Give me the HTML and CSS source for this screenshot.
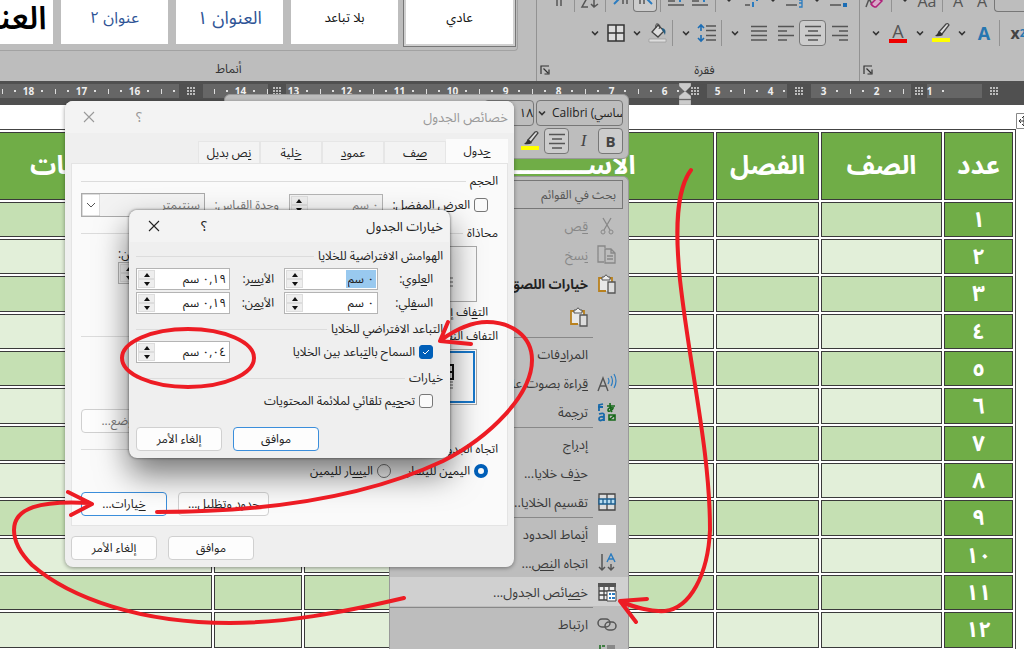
FILE: index.html
```html
<!DOCTYPE html>
<html lang="ar" dir="rtl">
<head>
<meta charset="utf-8">
<title>خيارات الجدول</title>
<link rel="stylesheet" href="styles.css">
</head>
<body>
<svg class="defs" aria-hidden="true">
  <symbol id="chev" viewBox="0 0 10 10"><path d="M2 3.5l3 3 3-3" fill="none" stroke="#333" stroke-width="1.6"/></symbol>
  <symbol id="launch" viewBox="0 0 10 10"><path d="M1 9V1h8M3.500 3.500L8 8M9 4.500V9H4.500" fill="none" stroke="#333" stroke-width="1.200"/></symbol>
  <symbol id="center" viewBox="0 0 22 22"><path d="M3 4.500h16M6 9h10M3 13.500h16M6 18h10" stroke="#555" stroke-width="1.500"/></symbol>
  <symbol id="marker" viewBox="0 0 22 22"><path d="M9 10l7-8q2-1 3 1l-7 9z" fill="#ddd" stroke="#444" stroke-width="1.300"/><path d="M9 9l4 4q-3 2-8 1 2-1 4-5z" fill="#333"/><path d="M2 16h18v4H2z" fill="#ff0"/></symbol>
  <symbol id="close" viewBox="0 0 12 12"><path d="M1 1l10 10M11 1L1 11" fill="none" stroke="currentColor" stroke-width="1.100"/></symbol>
  <symbol id="paste" viewBox="0 0 20 20"><path d="M2 4h12v13H2z" fill="#e8e8e8"/><path d="M6 4H2v13h7M11 4h4v4" fill="none" stroke="#b9811e" stroke-width="1.800"/><path d="M5 6V3h2q2-4 4 0h2v3z" fill="#eee" stroke="#555"/><path d="M11 8h7v11h-7z" fill="#ddd" stroke="#555" stroke-width="1.300"/></symbol>
</svg>

<header class="ribbon">
  <section class="group font-group">
    <div class="tools upper">
      <button class="tool" aria-label="مسح التنسيق"><svg viewBox="0 0 22 12"><path d="M1 7l3-8M4-1l3 5" stroke="#555" stroke-width="1.500"/><path d="M6 4l6-6 5 3-6 6q-3 0-5-3z" fill="#d9a8c8" stroke="#b0207a" stroke-width="1.500"/></svg></button>
      <span class="rule"></span>
      <button class="tool chev"><svg viewBox="0 0 10 12"><path d="M3 0h4L5 2z" fill="#333"/></svg></button>
      <button class="tool txt">Aa</button>
      <span class="rule"></span>
      <button class="tool txt">A</button>
      <button class="tool txt">A</button>
      <span class="stub"></span>
    </div>
    <div class="tools">
      <button class="tool chev" aria-label="لون الخط"><svg><use href="#chev"/></svg></button>
      <button class="tool letter red">A</button>
      <button class="tool chev"><svg><use href="#chev"/></svg></button>
      <button class="tool" aria-label="تمييز"><svg><use href="#marker"/></svg></button>
      <button class="tool chev"><svg><use href="#chev"/></svg></button>
      <button class="tool letter glow">A</button>
      <span class="rule"></span>
      <button class="tool sup">x<sup>2</sup></button>
    </div>
    <footer class="caption"><svg class="launch"><use href="#launch"/></svg></footer>
  </section>

  <section class="group para-group">
    <div class="tools upper">
      <button class="tool" aria-label="علامات الفقرة"><svg viewBox="0 0 22 12"><path d="M9 0v6M13 0v6" stroke="#555" stroke-width="1.500"/></svg></button>
      <span class="rule"></span>
      <button class="tool" aria-label="فرز"><svg viewBox="0 0 22 12"><path d="M8-2L3 7h6M15-2v9M12 4l3 3 4-3" fill="none" stroke="#555" stroke-width="1.500"/></svg></button>
      <span class="rule"></span>
      <button class="tool" aria-label="من اليسار إلى اليمين"><svg viewBox="0 0 22 12"><path d="M4 4l5-5" stroke="#2b7cc0" stroke-width="2"/><path d="M13 0v4M17 0v4" stroke="#555" stroke-width="1.500"/></svg></button>
      <button class="tool on" aria-label="من اليمين إلى اليسار"><svg viewBox="0 0 22 12"><path d="M6 0v4M10 0v4" stroke="#555" stroke-width="1.500"/><path d="M18 4l-5-5" stroke="#2b7cc0" stroke-width="2"/></svg></button>
      <span class="rule"></span>
      <button class="tool" aria-label="زيادة المسافة"><svg viewBox="0 0 22 12"><path d="M3 1h7M3 5h16" stroke="#555" stroke-width="1.500"/><path d="M15-1v3" stroke="#2b7cc0" stroke-width="2"/></svg></button>
      <button class="tool" aria-label="إنقاص المسافة"><svg viewBox="0 0 22 12"><path d="M3 1h7M3 5h16" stroke="#555" stroke-width="1.500"/><path d="M15-1v3" stroke="#2b7cc0" stroke-width="2"/></svg></button>
      <span class="rule"></span>
      <button class="tool chev"><svg viewBox="0 0 10 12"><path d="M3 0h4L5 2z" fill="#333"/></svg></button>
      <button class="tool" aria-label="متعدد المستويات"><svg viewBox="0 0 22 12"><path d="M5 5h5" stroke="#555" stroke-width="1.500"/><path d="M13 2v5M17-1v2" stroke="#2b7cc0" stroke-width="2"/></svg></button>
      <button class="tool chev"><svg viewBox="0 0 10 12"><path d="M3 0h4L5 2z" fill="#333"/></svg></button>
      <button class="tool" aria-label="ترقيم"><svg viewBox="0 0 22 12"><path d="M2 5h11" stroke="#555" stroke-width="1.500"/><path d="M15 0h3v3h-3M18 3v4h-3" fill="none" stroke="#2b7cc0" stroke-width="1.300"/></svg></button>
      <button class="tool chev"><svg viewBox="0 0 10 12"><path d="M3 0h4L5 2z" fill="#333"/></svg></button>
      <button class="tool" aria-label="تعداد نقطي"><svg viewBox="0 0 22 12"><path d="M2 5h11" stroke="#555" stroke-width="1.500"/><path d="M15 3h4v4h-4z" fill="#1b6db5"/></svg></button>
    </div>
    <div class="tools">
      <button class="tool chev"><svg><use href="#chev"/></svg></button>
      <button class="tool" aria-label="حدود"><svg viewBox="0 0 22 22"><path d="M3 3h16v16H3zM11 3v16M3 11h16" fill="#ddd" stroke="#333" stroke-width="1.500"/></svg></button>
      <button class="tool chev"><svg><use href="#chev"/></svg></button>
      <button class="tool" aria-label="تظليل"><svg viewBox="0 0 22 22"><path d="M5 10l6-7 6 6-6 6z" fill="#ddd" stroke="#444" stroke-width="1.300"/><path d="M9 6q-1-5 2-4t1 5" fill="none" stroke="#444"/><path d="M15 6q5 1 3 7-1-3-3-5z" fill="#245d82"/><path d="M2 17h17v3H2z" fill="#ddd" stroke="#999" stroke-width=".7"/></svg></button>
      <span class="rule"></span>
      <button class="tool chev"><svg><use href="#chev"/></svg></button>
      <button class="tool" aria-label="تباعد الأسطر"><svg viewBox="0 0 22 22"><path d="M5 4v5M5 13v5M2 6l3-3 3 3M2 16l3 3 3-3" fill="none" stroke="#1b6db5" stroke-width="1.600"/><path d="M10 4h10M10 8.500h10M10 13.500h10M10 18h10" stroke="#555" stroke-width="1.500"/></svg></button>
      <span class="rule"></span>
      <button class="tool chev"><svg><use href="#chev"/></svg></button>
      <button class="tool wide" aria-label="ضبط"><svg viewBox="0 0 22 22"><path d="M3 4.500h16M3 9h16M3 13.500h16M3 18h16" stroke="#555" stroke-width="1.500"/></svg></button>
      <button class="tool wide" aria-label="محاذاة لليسار"><svg viewBox="0 0 22 22"><path d="M3 4.500h16M3 9h9M3 13.500h16M3 18h9" stroke="#555" stroke-width="1.500"/></svg></button>
      <button class="tool wide on" aria-label="توسيط"><svg><use href="#center"/></svg></button>
      <button class="tool wide" aria-label="محاذاة لليمين"><svg viewBox="0 0 22 22"><path d="M3 4.500h16M10 9h9M3 13.500h16M10 18h9" stroke="#555" stroke-width="1.500"/></svg></button>
    </div>
    <footer class="caption"><svg class="launch"><use href="#launch"/></svg><span>فقرة</span></footer>
  </section>

  <section class="group styles-group">
    <div class="gallery">
      <button class="style picked">عادي</button>
      <button class="style">بلا تباعد</button>
      <button class="style h1">العنوان ١</button>
      <button class="style h2">عنوان ٢</button>
      <button class="style big">العنوان</button>
    </div>
    <footer class="caption"><span>أنماط</span></footer>
  </section>
</header>

<div class="ruler">
  <div class="scale">
    <span>1</span><span>2</span><span>3</span><span>4</span><span>5</span><span>6</span><span>7</span><span>8</span><span>9</span><span>10</span><span>11</span><span>12</span><span>13</span><span>14</span><span>15</span><span>16</span><span>17</span><span>18</span><span>19</span>
  </div>
  <i class="stop s1"></i><i class="stop s2"></i><i class="stop s3"></i><i class="stop s4"></i><i class="stop s5"></i><i class="stop s6"></i>
  <svg class="indent" viewBox="0 0 12 22"><path d="M0 0h12v3L6 9 0 3zM0 16v-3l6-5 6 5v3zM0 17h12v5H0z" fill="#ccc" stroke="#888" stroke-width=".5"/></svg>
</div>

<main class="doc">
  <svg class="move" viewBox="0 0 16 16"><path d="M.5.500h15v15H.5z" fill="#fff" stroke="#888"/><path d="M8 3v10M3 8h10M6 5l2-2 2 2M6 11l2 2 2-2M5 6L3 8l2 2M11 6l2 2-2 2" fill="none" stroke="#333"/></svg>
  <table class="sheet">
    <colgroup><col class="c-num"><col class="c-row"><col class="c-class"><col class="c-name"><col class="c-gap"><col></colgroup>
    <thead><tr><th>عدد</th><th>الصف</th><th>الفصل</th><th>الاســـــــــــــــــــــــــم</th><th></th><th class="notes">ملاحظات</th></tr></thead>
    <tbody>
      <tr><th>١</th><td></td><td></td><td></td><td></td><td></td></tr>
      <tr><th>٢</th><td></td><td></td><td></td><td></td><td></td></tr>
      <tr><th>٣</th><td></td><td></td><td></td><td></td><td></td></tr>
      <tr><th>٤</th><td></td><td></td><td></td><td></td><td></td></tr>
      <tr><th>٥</th><td></td><td></td><td></td><td></td><td></td></tr>
      <tr><th>٦</th><td></td><td></td><td></td><td></td><td></td></tr>
      <tr><th>٧</th><td></td><td></td><td></td><td></td><td></td></tr>
      <tr><th>٨</th><td></td><td></td><td></td><td></td><td></td></tr>
      <tr><th>٩</th><td></td><td></td><td></td><td></td><td></td></tr>
      <tr><th>١٠</th><td></td><td></td><td></td><td></td><td></td></tr>
      <tr><th>١١</th><td></td><td></td><td></td><td></td><td></td></tr>
      <tr><th>١٢</th><td></td><td></td><td></td><td></td><td></td></tr>
    </tbody>
  </table>
</main>

<div class="mini">
  <div class="mini-row">
    <button class="box fontname"><svg><use href="#chev"/></svg><span>Calibri (أساسي</span></button>
    <button class="box size">١٨</button>
  </div>
  <div class="mini-row">
    <button class="box sq on">B</button>
    <button class="sq it">I</button>
    <button class="box sq on" aria-label="توسيط"><svg><use href="#center"/></svg></button>
    <button class="sq" aria-label="تمييز"><svg><use href="#marker"/></svg></button>
  </div>
</div>

<nav class="menu">
  <input class="search" type="text" placeholder="بحث في القوائم" aria-label="بحث في القوائم">
  <button class="item off"><svg viewBox="0 0 20 20"><path d="M6 2l7 12M14 2L7 14" fill="none" stroke="#888" stroke-width="1.300"/><circle cx="6" cy="16" r="2" fill="none" stroke="#888"/><circle cx="14" cy="16" r="2" fill="none" stroke="#888"/></svg><span><u>ق</u>ص</span></button>
  <button class="item off"><svg viewBox="0 0 20 20"><path d="M8 3V1H1v16h6M8 4h6l4 4v10H8zM14 4v4h4M10 11h6M10 14h6" fill="none" stroke="#888" stroke-width="1.300"/></svg><span><u>ن</u>سخ</span></button>
  <button class="item bold"><svg><use href="#paste"/></svg><span>خيارات اللصق:</span></button>
  <button class="item paste" aria-label="لصق"><svg><use href="#paste"/></svg></button>
  <hr>
  <button class="item"><i></i><span>المرا<u>د</u>فات</span></button>
  <button class="item"><svg viewBox="0 0 20 20"><path d="M1 18L6 5l5 13M3 13h6" fill="none" stroke="#555" stroke-width="1.400"/><path d="M11 5q2 3 0 6M14 3q3 5 0 10M17 1q4 7 0 14" fill="none" stroke="#2b7cc0" stroke-width="1.200"/></svg><span><u>ق</u>راءة بصوت عالٍ</span></button>
  <button class="item"><svg viewBox="0 0 20 20"><path d="M10 4h8M13 1q0 6 2 9M17 6q-6-1-6 2t5-1M12 13h6v5h-6zM12 18l6-5" fill="none" stroke="#17691b" stroke-width="1.600"/><path d="M2 9V3l4-1M1 5h5M2 12q6-2 5 2v5M7 15q-5-1-5 2t5 0" fill="none" stroke="#1769aa" stroke-width="1.800"/></svg><span>تر<u>ج</u>مة</span></button>
  <hr>
  <button class="item"><i></i><span>إد<u>ر</u>اج</span></button>
  <button class="item"><i></i><span>ح<u>ذ</u>ف خلايا...</span></button>
  <button class="item"><svg viewBox="0 0 20 20"><path d="M2 2h16v16H2zM10 2v16" fill="#ddd" stroke="#444" stroke-width="1.300"/><path d="M2 7h16v5H2zM6 7v5M10 7v5M14 7v5" fill="#b8dcf0" stroke="#1b5d8f" stroke-width="1.300"/></svg><span>تقسيم الخلايا...</span></button>
  <hr>
  <button class="item"><svg viewBox="0 0 20 20"><path d="M1 1h18v18H1z" fill="#fff"/></svg><span>أ<u>ن</u>ماط الحدود</span></button>
  <button class="item"><svg viewBox="0 0 20 20"><path d="M5 1v16M2 14l3 3 3-3M14 11v6M11 14l3 3 3-3" fill="none" stroke="#555" stroke-width="1.500"/><path d="M10 9l4-8 4 8M12 6h4" fill="none" stroke="#2b7cc0" stroke-width="1.400"/></svg><span>اتجاه ال<u>نص</u>...</span></button>
  <button class="item hot"><svg viewBox="0 0 20 20"><path d="M2 2h16v16H2zM2 9h16M2 13h8M7 5v13M12 5v6" fill="#eee" stroke="#444" stroke-width="1.300"/><path d="M1 1h18v4H1z" fill="#555"/><path d="M10 9h9v10h-9z" fill="#fff" stroke="#444"/><path d="M12 11h2v2h-2zM12 15h2v2h-2zM15 11h3v2h-3zM15 15h3v2h-3z" fill="#2b7cc0"/></svg><span>خ<u>ص</u>ائص الجدول...</span></button>
  <hr>
  <button class="item"><svg viewBox="0 0 20 20"><rect x="1" y="5" width="12" height="8" rx="4" fill="none" stroke="#555" stroke-width="1.500"/><rect x="8" y="8" width="11" height="8" rx="4" fill="none" stroke="#555" stroke-width="1.500"/></svg><span>ارتباط</span></button>
  <button class="item"><svg viewBox="0 0 20 20"><path d="M3 10V2M5 3h3" stroke="#17691b" stroke-width="1.500"/><path d="M10 2h8v8h-8z" fill="#888"/></svg></button>
</nav>

<section class="dialog props" role="dialog" aria-label="خصائص الجدول">
  <header class="title"><span>خصائص الجدول</span><button class="help">؟</button><button class="x" aria-label="إغلاق"><svg><use href="#close"/></svg></button></header>
  <div class="tabs" role="tablist">
    <button role="tab" class="tab active"><u>ج</u>دول</button><button role="tab" class="tab"><u>ص</u>ف</button><button role="tab" class="tab">عمو<u>د</u></button><button role="tab" class="tab"><u>خ</u>لية</button><button role="tab" class="tab"><u>ن</u>ص بديل</button>
  </div>
  <div class="panel">
    <h3 class="legend">الحجم</h3>
    <div class="row">
      <input type="checkbox" id="pref"><label for="pref">العر<u>ض</u> المفضل:</label>
      <span class="spin dim first"><input type="text" value="٠ سم" aria-label="العرض"><span class="arrows"><button aria-label="زيادة"></button><button aria-label="إنقاص"></button></span></span>
      <label for="unit" class="dimtext">وحدة القياس:</label>
      <select id="unit" class="unit"><option>سنتيمتر</option></select>
    </div>
    <h3 class="legend">محاذاة</h3>
    <div class="pics">
      <button class="pic" aria-label="يمين"><svg viewBox="0 0 40 40"><path d="M2 8h12v12H2z" fill="none" stroke="#222" stroke-width="2"/><path d="M2 24h22M2 28h22M2 32h22" stroke="#666"/></svg></button>
      <div class="from"><label for="ind">المسافة من:</label><span class="spin dim"><input id="ind" type="text"><span class="arrows"><button aria-label="زيادة"></button><button aria-label="إنقاص"></button></span></span></div>
    </div>
    <p class="piccap">الت<u>ف</u>اف إلى اليمين</p>
    <h3 class="legend">التفاف النص</h3>
    <div class="pics">
      <button class="pic sel" aria-label="بلا"><svg viewBox="0 0 40 40"><path d="M2 8h22v14H2zM15 8v14M2 15h22" fill="none" stroke="#111" stroke-width="2"/><path d="M2 25h22M2 28h22M2 31h22" stroke="#666"/></svg></button>
    </div>
    <div class="row end"><button class="btn dimtext">الموضع...</button></div>
    <h3 class="legend">اتجاه الجدول</h3>
    <div class="row radios">
      <input type="radio" name="dir" id="rtl" checked><label for="rtl">اليم<u>ي</u>ن لليسار</label>
      <input type="radio" name="dir" id="ltr"><label for="ltr">الي<u>س</u>ار لليمين</label>
    </div>
    <div class="row actions"><button class="btn">حدود وتظليل...</button><button class="btn primary"><u>خ</u>يارات...</button></div>
  </div>
  <footer class="actions"><button class="btn">موافق</button><button class="btn">إلغاء الأمر</button></footer>
</section>

<section class="dialog opts" role="dialog" aria-label="خيارات الجدول">
  <header class="title"><span>خيارات الجدول</span><button class="help">؟</button><button class="x" aria-label="إغلاق"><svg><use href="#close"/></svg></button></header>
  <div class="content">
    <h3 class="legend">الهوامش الافتراضية للخلايا</h3>
    <div class="row fields">
      <label for="mt">ال<u>ع</u>لوي:</label><span class="spin"><span class="val"><input id="mt" class="marked" type="text" value="٠ سم"></span><span class="arrows"><button aria-label="زيادة"></button><button aria-label="إنقاص"></button></span></span>
      <label for="ml">الأي<u>س</u>ر:</label><span class="spin"><input id="ml" type="text" value="٠,١٩ سم"><span class="arrows"><button aria-label="زيادة"></button><button aria-label="إنقاص"></button></span></span>
    </div>
    <div class="row fields">
      <label for="mb">الس<u>ف</u>لي:</label><span class="spin"><input id="mb" type="text" value="٠ سم"><span class="arrows"><button aria-label="زيادة"></button><button aria-label="إنقاص"></button></span></span>
      <label for="mr">الأي<u>م</u>ن:</label><span class="spin"><input id="mr" type="text" value="٠,١٩ سم"><span class="arrows"><button aria-label="زيادة"></button><button aria-label="إنقاص"></button></span></span>
    </div>
    <h3 class="legend">التباعد الافتراضي للخلايا</h3>
    <div class="row checks">
      <input type="checkbox" id="sp" checked><label for="sp">السماح بال<u>ت</u>باعد بين الخلايا</label>
      <span class="spin last"><input type="text" value="٠,٠٤ سم" aria-label="التباعد"><span class="arrows"><button aria-label="زيادة"></button><button aria-label="إنقاص"></button></span></span>
    </div>
    <h3 class="legend">خيارات</h3>
    <div class="row checks"><input type="checkbox" id="fit"><label for="fit">تح<u>ج</u>يم تلقائي لملائمة المحتويات</label></div>
  </div>
  <footer class="actions"><button class="btn primary">موافق</button><button class="btn">إلغاء الأمر</button></footer>
</section>

<svg class="ink" viewBox="0 0 1024 649" aria-hidden="true">
  <path d="M691 170C676 190 675 230 680 280C690 370 710 450 710 530C708 575 690 608 665 611C650 612 635 607 621 602M647 599L620 601L636 622"/>
  <path d="M404 598C340 613 285 623 230 623C140 623 70 598 32 565C20 553 14 542 14 530C14 508 40 500 90 503M68 492L92 504L71 515"/>
  <path d="M157 512C260 512 360 500 443 461C490 437 532 395 532 360C532 335 510 322 487 322C470 322 455 330 441 340M448 322L440 341L471 344"/>
  <ellipse cx="188" cy="358" rx="66" ry="29"/>
</svg>
</body>
</html>
```

FILE: styles.css
```css
* { box-sizing: border-box; }
html, body { height: 100%; }
body {
  margin: 0;
  overflow: hidden;
  position: relative;
  display: flex;
  flex-direction: column;
  background: #fff;
  color: #222;
  font: 12px/16px "Open Sans", "Noto Sans Arabic", "Noto Sans", "DejaVu Sans", sans-serif;
}
button, input, select { font: inherit; color: inherit; margin: 0; padding: 0; }
button { background: none; border: 0; white-space: nowrap; }
u { text-underline-offset: 2px; }
.defs { display: none; }

/* ribbon */
.ribbon { display: flex; flex: none; height: 81px; background: #bdbdbd; }
.group { display: flex; flex-direction: column; flex: none; overflow: hidden; }
.font-group { width: 165px; border-left: 1px solid #929292; }
.para-group { width: 323px; border-left: 1px solid #929292; }
.styles-group { flex: 1; padding-right: 18px; }
.tools { display: flex; direction: ltr; align-items: center; height: 42px; padding-left: 48px; }
.font-group .tools { padding-left: 6px; }
.tools.upper { height: 12px; align-items: flex-start; padding-left: 10px; overflow: hidden; }
.font-group .tools.upper { padding-left: 4px; }
.tool { flex: none; width: 22px; height: 26px; display: flex; align-items: center; justify-content: center; }
.tool svg { width: 22px; height: 22px; }
.tool.chev { width: 20px; }
.tool.chev svg { width: 10px; height: 10px; }
.tool.wide { width: 27px; }
.tool.on, .box.on { background: #ccc; border: 1px solid #777; border-radius: 4px; }
.rule { flex: none; width: 1px; height: 26px; margin: 0 3px; background: #929292; }
.upper .tool { height: 12px; width: 24px; }
.upper .tool svg { width: 22px; height: 12px; }
.upper .tool.on { border-top: 0; border-radius: 0 0 4px 4px; }
.upper .tool.chev { width: 20px; }
.upper .tool.chev svg { width: 10px; height: 12px; }
.upper .rule { height: 12px; }
.tool.txt { font-size: 16px; line-height: 12px; color: #555; align-items: flex-end; padding-bottom: 5px; }
.stub { flex: 1; height: 12px; border: 1px solid #777; border-width: 0 0 1px 1px; border-radius: 0 0 0 4px; }
.tool.letter { font-size: 18px; line-height: 16px; color: #555; flex-direction: column; width: 24px; }
.red::after { content: ""; width: 18px; height: 4px; background: #e00; }
.tool.glow { color: #2576b0; font-weight: bold; }
.tool.sup { width: 30px; font-size: 16px; color: #444; font-weight: bold; }
.sup sup { font-size: 10px; line-height: 10px; color: #2576b0; }
.caption { display: flex; direction: ltr; flex: 1; align-items: center; padding: 5px 3px 0; color: #333; }
.para-group .caption { padding-right: 0; padding-left: 3px; }
.styles-group .caption { padding-right: 64px; }
.caption span { flex: 1; text-align: center; }
.launch { width: 10px; height: 10px; }
.gallery { display: flex; gap: 8px; height: 51px; padding: 0 4px 6px; border: 1px solid #a2a2a2; border-width: 0 1px 1px 0; border-radius: 0 0 4px 0; overflow: hidden; }
.style { flex: none; width: 107px; height: 44px; background: #fff; font-size: 13px; padding-bottom: 10px; color: #111; }
.style.picked { outline: 1px solid #777; outline-offset: 2px; box-shadow: 0 0 0 2px #d0d0d0; }
.style.h1 { font-size: 18px; color: #2f5496; }
.style.h2 { font-size: 16px; color: #2f5496; }
.style.big { font-size: 32px; font-weight: 600; color: #000; }

/* ruler */
.ruler { flex: none; height: 24px; padding-top: 3px; position: relative; background: #505050; overflow: hidden; }
.scale { display: flex; height: 14px; margin-right: 42px; padding-right: 26px; background: #666; overflow: hidden; }
.scale span { flex: none; width: 53px; text-align: center; color: #eee; font: bold 10px/14px "Open Sans", sans-serif;
  background: radial-gradient(circle, #ddd 1px, transparent 1px) 6px 0 / 14px 14px no-repeat, radial-gradient(circle, #ddd 1px, transparent 1px) 33px 0 / 14px 14px no-repeat, linear-gradient(#ddd, #ddd) 0 5px / 1px 5px no-repeat; }
.stop { position: absolute; top: 3px; width: 24px; height: 14px; background: repeating-linear-gradient(90deg, transparent 0 2px, #505050 2px 3px) center / 9px 9px no-repeat, repeating-linear-gradient(#bbb 0 2px, #505050 2px 3px) center / 9px 9px no-repeat #505050; }
.s1 { right: 18px; } .s2 { right: 97px; width: 16px; } .s3 { right: 213px; } .s4 { right: 317px; } .s5 { right: 738px; width: 18px; } .s6 { right: 821px; }
.indent { position: absolute; top: 2px; right: 333px; width: 12px; height: 22px; }

/* document */
.doc { flex: 1; position: relative; padding: 24px 8px 0 0; overflow: hidden; }
.move { position: absolute; top: 8px; right: -8px; width: 16px; height: 16px; }
.sheet { width: calc(100% + 8px); table-layout: fixed; border-collapse: separate; border-spacing: 2px; border: 1px solid #444; margin-left: -8px; }
.c-num { width: 69px; } .c-row { width: 121px; } .c-class { width: 103px; } .c-name { width: 410px; } .c-gap { width: 88px; }
.sheet th, .sheet td { border: 1px solid #3a3a3a; padding: 0; height: 35px; }
.sheet tr:nth-child(3n) td { height: 36px; }
.sheet th { background: #70ad47; color: #fff; font: bold 22px/24px "Noto Sans Arabic", "DejaVu Sans", sans-serif; }
.sheet thead th { height: 68px; font-size: 26px; line-height: 32px; white-space: nowrap; overflow: hidden; }
.sheet td { background: #e2efd9; }
.sheet tr:nth-child(odd) td { background: #c5e0b3; }
.sheet thead .notes { text-align: left; padding-left: 34px; }

/* floating toolbar */
.mini { position: absolute; top: 94px; left: 224px; width: 405px; height: 65px; padding: 5px; background: #bdbdbd; border: 1px solid #999; border-radius: 6px; display: flex; flex-direction: column; gap: 2px; }
.mini-row { display: flex; gap: 2px; }
.box { border: 1px solid #777; border-radius: 4px; height: 26px; }
.fontname { width: 87px; display: flex; direction: ltr; align-items: center; overflow: hidden; }
.fontname svg { width: 10px; height: 10px; flex: none; margin-right: 5px; }
.fontname span { flex: none; }
.size { width: 50px; text-align: right; }
.sq { width: 25px; height: 26px; display: flex; align-items: center; justify-content: center; font-size: 15px; font-weight: bold; color: #444; }
.sq svg { width: 22px; height: 22px; }
.it { font: italic 17px/20px "Liberation Serif", serif; }

/* context menu */
.menu { position: absolute; top: 176px; left: 389px; bottom: 0; width: 240px; padding: 3px 5px 0 0; background: #bdbdbd; border: 1px solid #999; border-bottom: 0; overflow: hidden; display: flex; flex-direction: column; border-radius: 0 6px 0 0; font-size: 13px; color: #3a3a3a; }
.search { flex: none; height: 29px; margin-bottom: 2px; padding: 0 6px; border: 1px solid #777; background: #bdbdbd; font-size: 12px; }
.search::placeholder { color: #555; opacity: 1; }
.item { flex: none; display: flex; align-items: center; gap: 9px; height: 29px; margin-right: -5px; padding-right: 11px; text-align: right; }
.item svg, .item i { flex: none; width: 20px; height: 20px; }
.item.off { color: #888; }
.item.bold { font-weight: bold; color: #222; }
.item.paste { height: 38px; padding-right: 39px; }
.item.hot { background: #d0d0d0; }
.menu hr { flex: none; width: 203px; height: 1px; margin: 1px 30px 1px 0; border: 0; background: #888; }

/* dialogs */
.dialog { position: absolute; background: #efefef; border-radius: 8px; display: flex; flex-direction: column; }
.props { top: 101px; left: 65px; width: 449px; box-shadow: 0 1px 4px #0006; padding: 0 6px 7px; }
.opts { top: 210px; left: 129px; width: 321px; padding: 0 7px 7px; box-shadow: 0 16px 32px #0008, 0 0 3px #0009; }
.title { display: flex; align-items: center; height: 32px; margin: 0 -6px; padding: 0 6px 0 18px; background: #f3f3f3; border-radius: 8px 8px 0 0; font-size: 13px; color: #222; }
.props .title { color: #999; }
.title span { flex: 1; }
.help { width: 20px; font-size: 14px; margin-left: 34px; }
.x svg { display: block; width: 12px; height: 12px; }
.tabs { display: flex; align-items: flex-end; margin-top: 6px; }
.tab { width: 62px; height: 22px; background: #f3f3f3; border: 1px solid #e6e6e6; border-bottom: 0; }
.tab.active { height: 24px; background: #fbfbfb; border: 0; }
.panel { height: 363px; padding: 9px 9px 0; background: #fafafa; border: 1px solid #e4e4e4; }
.legend { display: flex; align-items: center; gap: 4px; height: 16px; margin: 0; font: inherit; white-space: nowrap; }
.legend::after { content: ""; flex: 1; height: 1px; background: #dcdcdc; }
.row { display: flex; align-items: center; height: 24px; white-space: nowrap; }
.panel .row { padding-right: 10px; margin-top: 4px; }
.panel .legend { margin-top: 8px; }
.panel .legend:first-child { margin-top: 0; }
input[type=checkbox], input[type=radio] { appearance: none; flex: none; width: 14px; height: 14px; border: 1px solid #777; border-radius: 3px; background: #fafafa; margin-left: 4px; }
input[type=checkbox]:checked { border-color: #005fb8; background: #005fb8 url("data:image/svg+xml,%3Csvg xmlns='http://www.w3.org/2000/svg' viewBox='0 0 12 12'%3E%3Cpath d='M3 6l2 2 4-4' fill='none' stroke='white'/%3E%3C/svg%3E"); }
input[type=radio] { border-radius: 50%; }
input[type=radio]:checked { border: 4px solid #005fb8; }
.spin { display: flex; flex: none; width: 94px; height: 22px; padding: 1px; border: 1px solid #b4b4b4; background: #fff; }
.spin input { flex: 1; min-width: 0; width: 100%; border: 0; background: none; padding: 0 2px; }
.val { flex: 1; display: flex; justify-content: flex-start; }
.spin input.marked { flex: none; width: 30px; background: #99c9ef; }
.arrows { display: flex; flex-direction: column; width: 17px; background: #eee; }
.arrows button { flex: 1; border: 1px solid #ddd; display: flex; align-items: center; justify-content: center; }
.arrows button::after { content: ""; border: 3px solid transparent; border-top: 0; border-bottom: 4px solid #111; }
.arrows button + button::after { border: 3px solid transparent; border-bottom: 0; border-top: 4px solid #111; }
.dim { background: #f3f3f3; color: #888; }
.dimtext { color: #777; }
.first { margin-right: auto; margin-left: 10px; }
.unit { width: 124px; height: 24px; margin-right: auto; padding: 0 4px; color: #777; border: 1px solid #aaa; border-radius: 0; appearance: none; background: url("data:image/svg+xml,%3Csvg xmlns='http://www.w3.org/2000/svg' viewBox='0 0 18 22'%3E%3Cpath d='M0 0h18v22H0z' fill='white' stroke='%23bbb'/%3E%3Cpath d='M5 9l4 4 4-4' fill='none' stroke='%23555'/%3E%3C/svg%3E") left / 18px 22px no-repeat #f3f3f3; }
.pics { display: flex; justify-content: space-between; margin: 5px 0 0; padding: 0 21px 0 37px; height: 56px; }
.pic { width: 57px; height: 56px; border: 1px solid #aaa; display: flex; align-items: center; justify-content: center; }
.pic svg { width: 40px; height: 40px; }
.pic.sel { box-shadow: inset 0 0 0 1px #fff, inset 0 0 0 3px #1778cc; }
.from { display: flex; flex-direction: column; align-items: flex-end; }
.piccap { margin: 2px 10px 0 0; height: 16px; }
.panel .row.end { justify-content: flex-end; padding: 0; }
.panel .row.radios { margin-top: 2px; }
.radios label { margin-left: 16px; }
.panel .row.actions { padding: 0; margin-top: 9px; }
.btn { min-width: 86px; height: 24px; padding: 0 9px; background: #fdfdfd; border: 1px solid #d0d0d0; border-radius: 4px; }
.btn.primary { border-color: #3b8edb; }
.actions { display: flex; justify-content: flex-end; gap: 11px; }
.props > .actions { margin-top: 10px; }
.opts > .actions { margin-top: 14px; }
.opts .legend { margin: 6px 0 3px; }
.fields { padding-right: 10px; display: grid; grid-template-columns: 55px 94px 54px 94px; }
.fields label:nth-of-type(2) { padding-right: 10px; }
.checks { padding-right: 10px; }
.last { margin-right: auto; }

.ink { position: absolute; inset: 0; width: 1024px; height: 649px; fill: none; stroke: #ed1c24; stroke-width: 4; stroke-linecap: round; stroke-linejoin: round; pointer-events: none; }
```
